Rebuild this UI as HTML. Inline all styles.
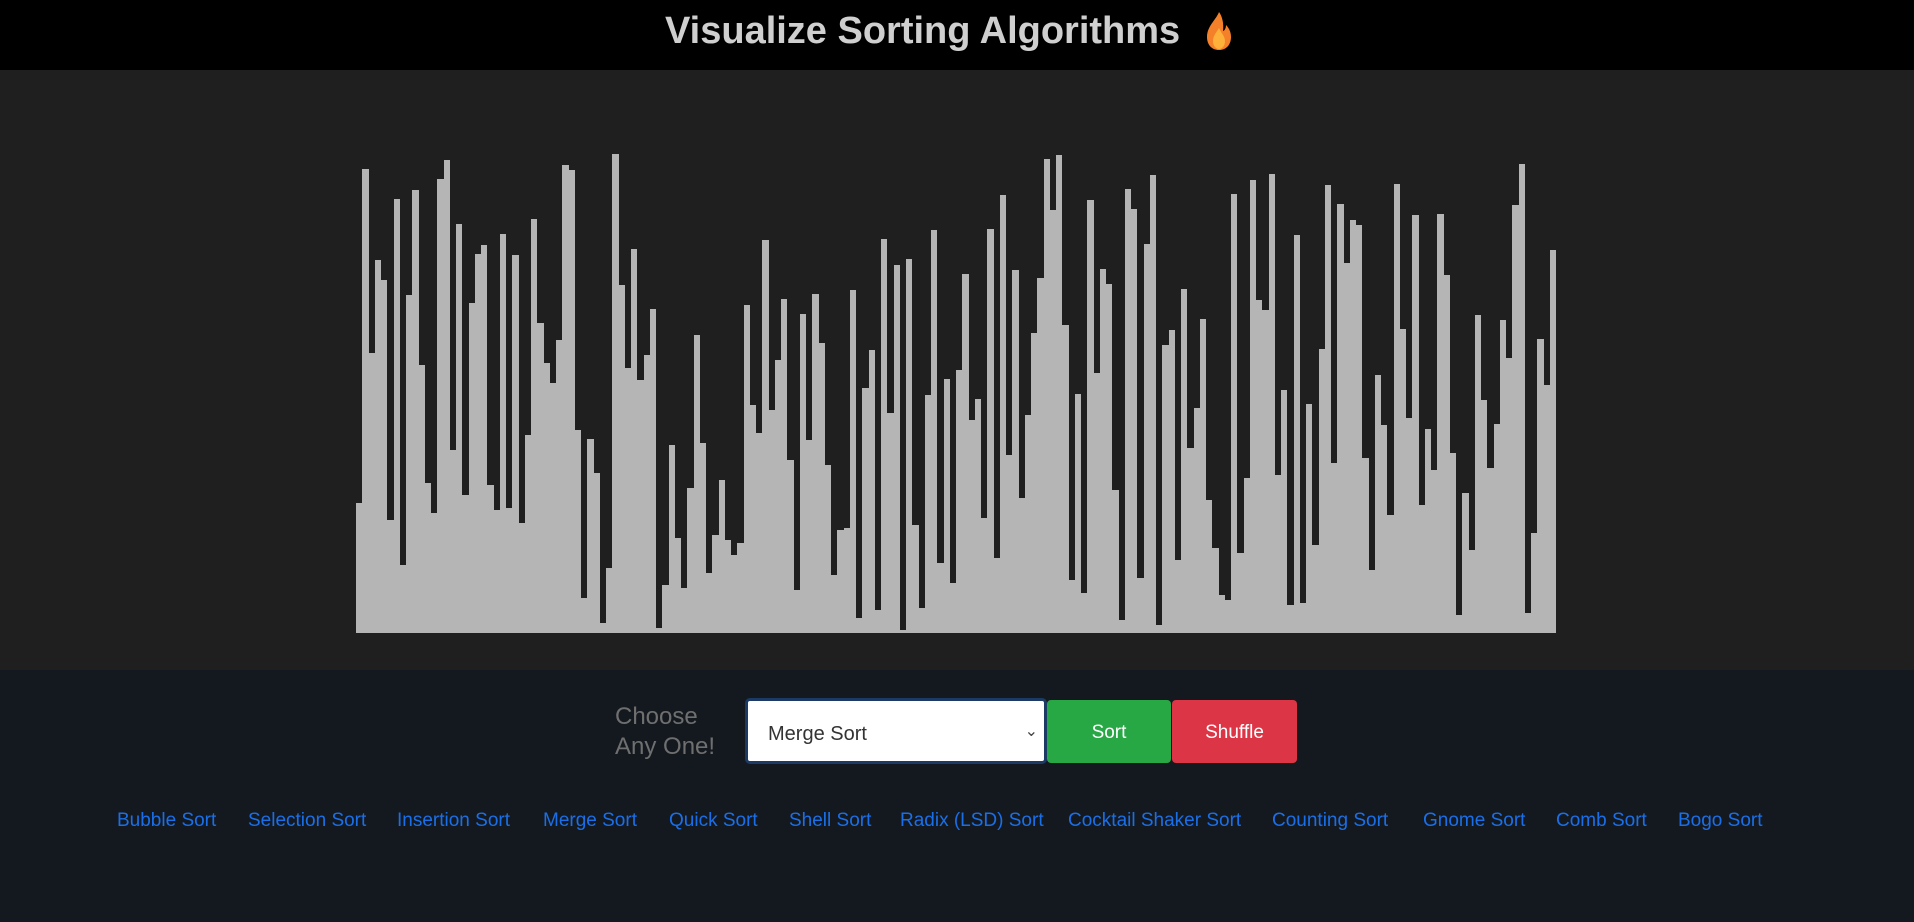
<!DOCTYPE html>
<html><head><meta charset="utf-8"><style>
*{margin:0;padding:0;box-sizing:border-box}
body{width:1914px;height:922px;background:#141920;font-family:"Liberation Sans",sans-serif;position:relative;overflow:hidden}
#hdr{position:absolute;left:0;top:0;width:1914px;height:70px;background:#000}
#title{position:absolute;left:-8px;width:1914px;top:10px;text-align:center;font-size:38px;font-weight:bold;color:#cfcfcf;letter-spacing:0}
#stage{position:absolute;left:0;top:70px;width:1914px;height:600px;background:#1f1f1f}
#bars{position:absolute;left:356px;top:0;width:1200px;height:633px;display:flex;align-items:flex-end}
#bars div{flex:1;background:#b5b5b5}
.lbl{position:absolute;left:615px;top:702px;font-size:24px;line-height:30px;color:#6f6f6f}
.sel{position:absolute;left:745px;top:698px;width:302px;height:66px;background:#fff;border:3px solid #1b3b66;border-radius:5px;font-size:20px;color:#333;padding:22px 0 0 20px}
.sel span{position:absolute;right:6px;top:20px;font-size:16px;color:#444}
.btn{position:absolute;top:700px;height:63px;border-radius:4px;color:#fff;font-size:19px;text-align:center;line-height:66px}
a{position:absolute;top:810px;font-size:19px;color:#1a6fe8;text-decoration:none;white-space:nowrap}
</style></head><body>
<div id="hdr"></div>
<div id="title">Visualize Sorting Algorithms&nbsp;&nbsp;&nbsp;&nbsp;&nbsp;</div>
<svg style="position:absolute;left:1202px;top:10px" width="34" height="42" viewBox="0 0 34 42"><path d="M17 2C14 10 5 16 5 27c0 8 5 13 12 13s12-5 12-13c0-6-3-10-5-12 0 4-2 6-3 6 1-8-1-15-4-19z" fill="#f4812a"/><path d="M17 18c-3 5-6 8-6 13 0 5 3 8 6 8s6-3 6-8c0-5-4-8-6-13z" fill="#fdb03a"/></svg>
<div id="stage"></div>
<div id="bars"></div>
<div class="lbl">Choose<br>Any One!</div>
<div class="sel">Merge Sort<span>&#8964;</span></div>
<div class="btn" style="left:1047px;width:124px;background:#28a745">Sort</div>
<div class="btn" style="left:1172px;width:125px;background:#dc3545">Shuffle</div>
<a style="left:117px">Bubble Sort</a>
<a style="left:248px">Selection Sort</a>
<a style="left:397px">Insertion Sort</a>
<a style="left:543px">Merge Sort</a>
<a style="left:669px">Quick Sort</a>
<a style="left:789px">Shell Sort</a>
<a style="left:900px">Radix (LSD) Sort</a>
<a style="left:1068px">Cocktail Shaker Sort</a>
<a style="left:1272px">Counting Sort</a>
<a style="left:1423px">Gnome Sort</a>
<a style="left:1556px">Comb Sort</a>
<a style="left:1678px">Bogo Sort</a>
<script>
var t=[1088,85,637,360,420,1138,175,1273,465,150,675,1028,1118,115,60,928,250,1063,488,340,315,1035,1108,280,1103,345,1148,884,235,548,668,728,600,75,90,870,1373,895,998,1448,1283,40,435,683,325,718,645,505,1463,1333,915,1193,1343,1043,585,908,1298,1183,1020,1198,1243,1208,495,
795,878,300,808,660,475,958,1348,520,898,460,608,973,1303,1168,1163,450,1432,743,630,1408,295,818,375,1468,355,1153,1403,765,270,1268,715,1328,690,400,838,775,1133,265,1253,165,943,390,1073,825,578,413,55,210,45,555,1318,760,1358,180,698,385,430,1050,1438,145,205,1313,310,
105,1453,615,570,1258,445,923,803,535,1078,1223,1363,1378,160,1238,1013,120,480,510,100,1003,750,1393,285,1388,790,1213,625,135,968,190,368,240,255,953,1288,705,855,1123,130,565,833,225,1093,865,988,220,405,938,1423,1058,1228,525,780,983,850,540,653,195,70,1418,1178,595,735,330];
var b=document.getElementById('bars'),h='';
for(var i=0;i<t.length;i++){h+='<div style="height:'+((1478-t[i])/3).toFixed(1)+'px"></div>';}
b.innerHTML=h;
</script>
</body></html>
